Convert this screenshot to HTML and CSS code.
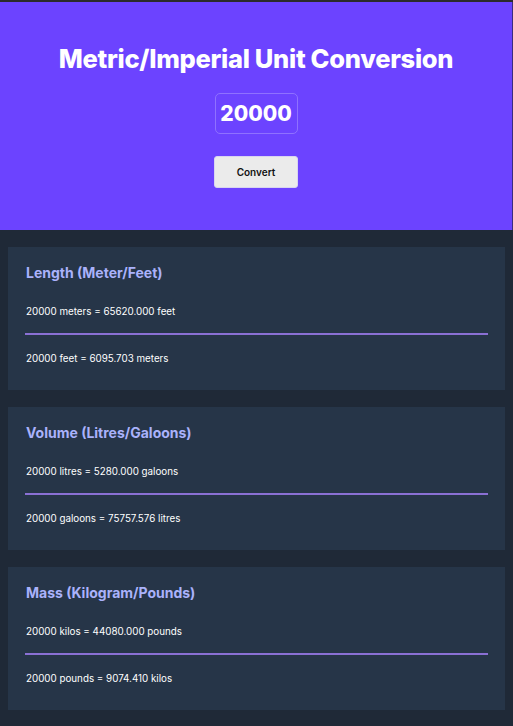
FILE: index.html
```html
<!DOCTYPE html>
<html>
<head>
<meta charset="utf-8">
<link rel="stylesheet" href="styles.css">
</head>
<body>
<header class="hero">
  <h1 class="hero-title">Metric/Imperial Unit Conversion</h1>
  <div class="hero-input">20000</div>
  <button class="hero-btn">Convert</button>
</header>
<main class="cards">
  <section class="card">
    <h2 class="card-title">Length (Meter/Feet)</h2>
    <p class="card-line">20000 meters = 65620.000 feet</p>
    <hr class="card-divider">
    <p class="card-line">20000 feet = 6095.703 meters</p>
  </section>
  <section class="card">
    <h2 class="card-title">Volume (Litres/Galoons)</h2>
    <p class="card-line">20000 litres = 5280.000 galoons</p>
    <hr class="card-divider">
    <p class="card-line">20000 galoons = 75757.576 litres</p>
  </section>
  <section class="card">
    <h2 class="card-title">Mass (Kilogram/Pounds)</h2>
    <p class="card-line">20000 kilos = 44080.000 pounds</p>
    <hr class="card-divider">
    <p class="card-line">20000 pounds = 9074.410 kilos</p>
  </section>
</main>
</body>
</html>
```

FILE: styles.css
```css
html, body {
  margin: 0;
  padding: 0;
}
body {
  background: #1f2937;
  font-family: "Inter", "Lato", sans-serif;
  border-top: 2px solid #2b2b2b;
  min-height: 724px;
}
.hero {
  background: #6c43ff;
  height: 228px;
  display: flex;
  flex-direction: column;
  align-items: center;
  box-sizing: border-box;
  padding-top: 41px;
  border-right: 1px solid #3a2a80;
}
.hero-title {
  margin: 0;
  color: #ffffff;
  font-size: 25.5px;
  font-weight: 800;
  line-height: 31px;
  letter-spacing: -0.3px;
}
.hero-input {
  margin-top: 19px;
  width: 83px;
  height: 41px;
  box-sizing: border-box;
  border: 1px solid #8f71ff;
  border-radius: 5px;
  color: #ffffff;
  font-size: 21px;
  font-weight: 800;
  display: flex;
  align-items: center;
  justify-content: center;
}
.hero-btn {
  margin-top: 22px;
  width: 84px;
  height: 32px;
  border: 1px solid #d8d4f0;
  border-radius: 3px;
  background: #ebebeb;
  color: #111111;
  font-family: "Inter", "Lato", sans-serif;
  font-size: 10px;
  font-weight: 600;
  padding: 0;
}
.cards {
  display: flex;
  flex-direction: column;
  gap: 17px;
  padding: 17px 8px 16px;
}
.card {
  background: #263548;
  padding: 17px 17px 0;
  height: 143px;
  box-sizing: border-box;
}
.card-title {
  margin: 0;
  padding-left: 1px;
  color: #aab2fb;
  font-size: 14px;
  font-weight: 700;
  line-height: 18px;
}
.card-line {
  margin: 0;
  padding-left: 1px;
  color: #ffffff;
  font-size: 9.8px;
  line-height: 14px;
}
.card-title + .card-line {
  margin-top: 23px;
}
.card-divider {
  margin: 14px 0 17px;
  border: 0;
  height: 2px;
  background: #8a70d4;
}
```
